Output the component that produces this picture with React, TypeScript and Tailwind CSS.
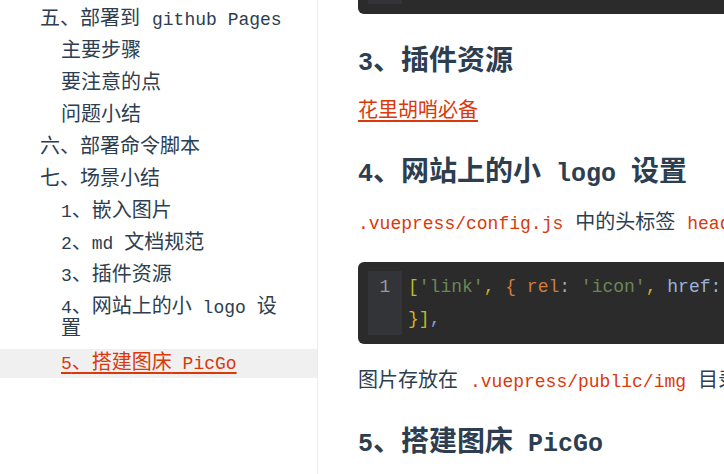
import React from "react";

// latin runs in the mono font are drawn a touch smaller so they keep Consolas widths
const M = ({ children }: { children: React.ReactNode }) => (
  <span className="text-[18px]">{children}</span>
);
const HM = ({ children }: { children: React.ReactNode }) => (
  <span className="text-[25px] leading-none">{children}</span>
);
const Code = ({ children, className = "" }: { children: React.ReactNode; className?: string }) => (
  <code className={`font-['Liberation_Mono',monospace] text-[18px] leading-none text-[#d9390b] ${className}`}>{children}</code>
);

function SideItem({ level, active, children }: { level: 1 | 2; active?: boolean; children: React.ReactNode }) {
  if (active) {
    return (
      <div className="mt-[3px] h-[29px] leading-[29px] bg-[#f0f0f0] pl-[61px]">
        <a className="text-[#d9390b] underline underline-offset-[3px] decoration-2">{children}</a>
      </div>
    );
  }
  return (
    <div className={`py-[5px] leading-[22px] pr-[30px] ${level === 1 ? "pl-[40px]" : "pl-[61px]"}`}>{children}</div>
  );
}

function Sidebar() {
  return (
    <aside className="w-[318px] shrink-0 border-r border-[#eaecef] pt-[4px] text-[20px] text-[#2c3e50] font-['Liberation_Mono','Noto_Sans_CJK_SC',monospace]">
      <SideItem level={1}>五、部署到 <M>github Pages</M></SideItem>
      <SideItem level={2}>主要步骤</SideItem>
      <SideItem level={2}>要注意的点</SideItem>
      <SideItem level={2}>问题小结</SideItem>
      <SideItem level={1}>六、部署命令脚本</SideItem>
      <SideItem level={1}>七、场景小结</SideItem>
      <SideItem level={2}><M>1</M>、嵌入图片</SideItem>
      <SideItem level={2}><M>2</M>、<M>md </M>文档规范</SideItem>
      <SideItem level={2}><M>3</M>、插件资源</SideItem>
      <SideItem level={2}><M>4</M>、网站上的小<M> logo </M>设置</SideItem>
      <SideItem level={2} active><M>5</M>、搭建图床<M> PicGo</M></SideItem>
    </aside>
  );
}

function H3({ children, className = "" }: { children: React.ReactNode; className?: string }) {
  return (
    <h3 className={`text-[28px] font-bold leading-[35px] text-[#2c3e50] font-['Liberation_Mono','Noto_Sans_CJK_SC',monospace] ${className}`}>
      {children}
    </h3>
  );
}

function Content() {
  return (
    <main className="w-[760px] shrink-0 pl-[40px] text-[20px] text-[#2c3e50] font-['Liberation_Sans','Noto_Sans_CJK_SC',sans-serif]">
      {/* tail of the previous code block */}
      <div className="h-[14px] rounded-b-[6px] bg-[#2b2b2b]">
        <div className="ml-[10px] h-[4px] w-[34px] bg-[#323438]" />
      </div>

      <H3 className="mt-[31px]"><HM>3</HM>、插件资源</H3>
      <p className="mt-[14px] leading-[32px]">
        <a className="text-[#d9390b] underline underline-offset-[3px]">花里胡哨必备</a>
      </p>

      <H3 className="mt-[30px]"><HM>4</HM>、网站上的小<HM> logo </HM>设置</H3>
      <p className="mt-[15px] leading-[32px] whitespace-nowrap">
        <Code className="mr-[12px]">.vuepress/config.js</Code>中的头标签<Code className="ml-[12px]">head</Code>
      </p>

      <div className="mt-[24px] flex rounded-[6px] bg-[#2b2b2b] py-[9px] pl-[10px] font-['Liberation_Mono',monospace] text-[18px] leading-[32px]">
        <div className="w-[34px] shrink-0 bg-[#323438] text-center text-[#9a9a9a]">
          1<br />&nbsp;
        </div>
        <div className="whitespace-nowrap pl-[6px]">
          <div>
            <span className="text-[#b9bb2a]">[</span>
            <span className="text-[#6a8759]">'link'</span>
            <span className="text-[#d4a82a]">, </span>
            <span className="text-[#d27b3a]">{"{ rel"}</span>
            <span className="text-[#a9a9a0]">: </span>
            <span className="text-[#6a8759]">'icon'</span>
            <span className="text-[#d4a82a]">, </span>
            <span className="text-[#9db2d5]">href: </span>
            <span className="text-[#6a8759]">'/img/logo.png'</span>
          </div>
          <div>
            <span className="text-[#d4b32a]">{"}"}</span>
            <span className="text-[#b9bb2a]">]</span>
            <span className="text-[#8aa0c8]">,</span>
          </div>
        </div>
      </div>

      <p className="mt-[20px] leading-[32px] whitespace-nowrap">
        图片存放在<Code className="ml-[12px] mr-[12px]">.vuepress/public/img</Code>目录下
      </p>

      <H3 className="mt-[30px]"><HM>5</HM>、搭建图床<HM> PicGo</HM></H3>
    </main>
  );
}

export default function App() {
  return (
    <div className="flex h-[474px] w-[724px] overflow-hidden bg-white">
      <Sidebar />
      <Content />
    </div>
  );
}
